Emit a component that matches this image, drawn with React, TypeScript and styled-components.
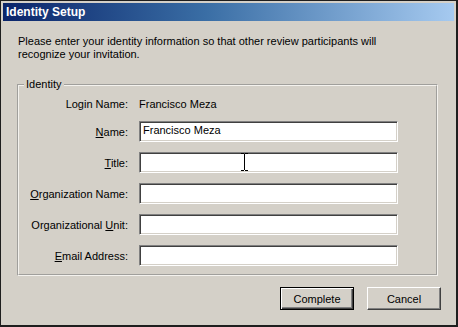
import styled, { createGlobalStyle } from "styled-components";

const GlobalStyle = createGlobalStyle`
  html, body {
    margin: 0;
    padding: 0;
    background: #d4d0c8;
  }
  body {
    font-family: "Liberation Sans", Arial, sans-serif;
    font-size: 11px;
    color: #000;
  }
`;

type Field = { label: string; key: string; rest: string; value?: string };

const fields: Field[] = [
  { label: "", key: "N", rest: "ame:", value: "Francisco Meza" },
  { label: "", key: "T", rest: "itle:" },
  { label: "", key: "O", rest: "rganization Name:" },
  { label: "Organizational ", key: "U", rest: "nit:" },
  { label: "", key: "E", rest: "mail Address:" },
];

export default function App() {
  return (
    <>
      <GlobalStyle />
      <Window>
        <TitleBar>Identity Setup</TitleBar>
        <Body>
          <Intro>
            Please enter your identity information so that other review participants will
            <br />
            recognize your invitation.
          </Intro>
          <Group>
            <Legend>Identity</Legend>
            <Form>
              <Label>Login Name:</Label>
              <Value>Francisco Meza</Value>
              {fields.map((f) => (
                <Row key={f.key}>
                  <Label>
                    {f.label}
                    <u>{f.key}</u>
                    {f.rest}
                  </Label>
                  <Input>{f.value}</Input>
                </Row>
              ))}
            </Form>
          </Group>
          <Buttons>
            <Button $default>Complete</Button>
            <Button>Cancel</Button>
          </Buttons>
        </Body>
        <Cursor width="9" height="18" viewBox="0 0 9 18">
          <path d="M1 0.5h3M5 0.5h3M1 17.5h3M5 17.5h3M4.5 1v16" stroke="#000" strokeWidth="1" fill="none" />
        </Cursor>
      </Window>
    </>
  );
}

const Window = styled.div`
  position: relative;
  box-sizing: border-box;
  width: 458px;
  height: 327px;
  border: 1px solid #1e1e1e;
  border-right-width: 2px;
  border-bottom-width: 2px;
  padding: 2px 2px 0 2px;
  background: #d4d0c8;
  display: flex;
  flex-direction: column;
`;

const TitleBar = styled.div`
  height: 18px;
  line-height: 18px;
  padding-left: 3px;
  background: linear-gradient(to right, #0a246a 0%, #3a6ea5 45%, #a6caf0 100%);
  color: #fff;
  font-weight: bold;
  font-size: 12px;
`;

const Body = styled.div`
  flex: 1;
  padding: 14px 15px 0 14px;
  display: flex;
  flex-direction: column;
`;

const Intro = styled.div`
  line-height: 13px;
  margin-left: 1px;
`;

const Group = styled.fieldset`
  margin: 17px 0 0 0;
  padding: 0 38px 8px 0;
  border: 2px groove #f4f2ee;
  min-width: 0;
  width: 421px;
  box-sizing: border-box;
`;

const Legend = styled.legend`
  margin-left: 5px;
  padding: 0 3px 0 2px;
  line-height: 13px;
`;

const Form = styled.div`
  display: grid;
  grid-template-columns: 109px 259px;
  grid-template-rows: 14px repeat(5, 21px);
  column-gap: 11px;
  row-gap: 10px;
  align-items: center;
  padding-top: 6px;
`;

const Row = styled.div`
  display: contents;
`;

const Label = styled.div`
  text-align: right;
  white-space: nowrap;
`;

const Value = styled.div`
  white-space: nowrap;
`;

const Input = styled.div`
  box-sizing: border-box;
  height: 21px;
  line-height: 17px;
  padding: 0 3px;
  background: #fff;
  border-top: 1px solid #808080;
  border-left: 1px solid #808080;
  border-bottom: 1px solid #fff;
  border-right: 1px solid #fff;
  box-shadow: inset 1px 1px 0 #404040, inset -1px -1px 0 #d4d0c8;
  white-space: nowrap;
`;

const Buttons = styled.div`
  display: flex;
  justify-content: flex-end;
  gap: 13px;
  margin-top: 11px;
  margin-right: -2px;
`;

const Button = styled.div<{ $default?: boolean }>`
  box-sizing: border-box;
  width: 74px;
  height: 23px;
  display: flex;
  align-items: center;
  justify-content: center;
  background: #d4d0c8;
  border: 1px solid ${(p) => (p.$default ? "#000" : "#fff")};
  ${(p) => (p.$default ? "" : "border-right-color: #404040; border-bottom-color: #404040;")}
  box-shadow: ${(p) =>
    p.$default
      ? "inset 1px 1px 0 #fff, inset -1px -1px 0 #404040, inset -2px -2px 0 #808080"
      : "inset -1px -1px 0 #808080"};
`;

const Cursor = styled.svg`
  position: absolute;
  left: 239px;
  top: 152px;
`;
